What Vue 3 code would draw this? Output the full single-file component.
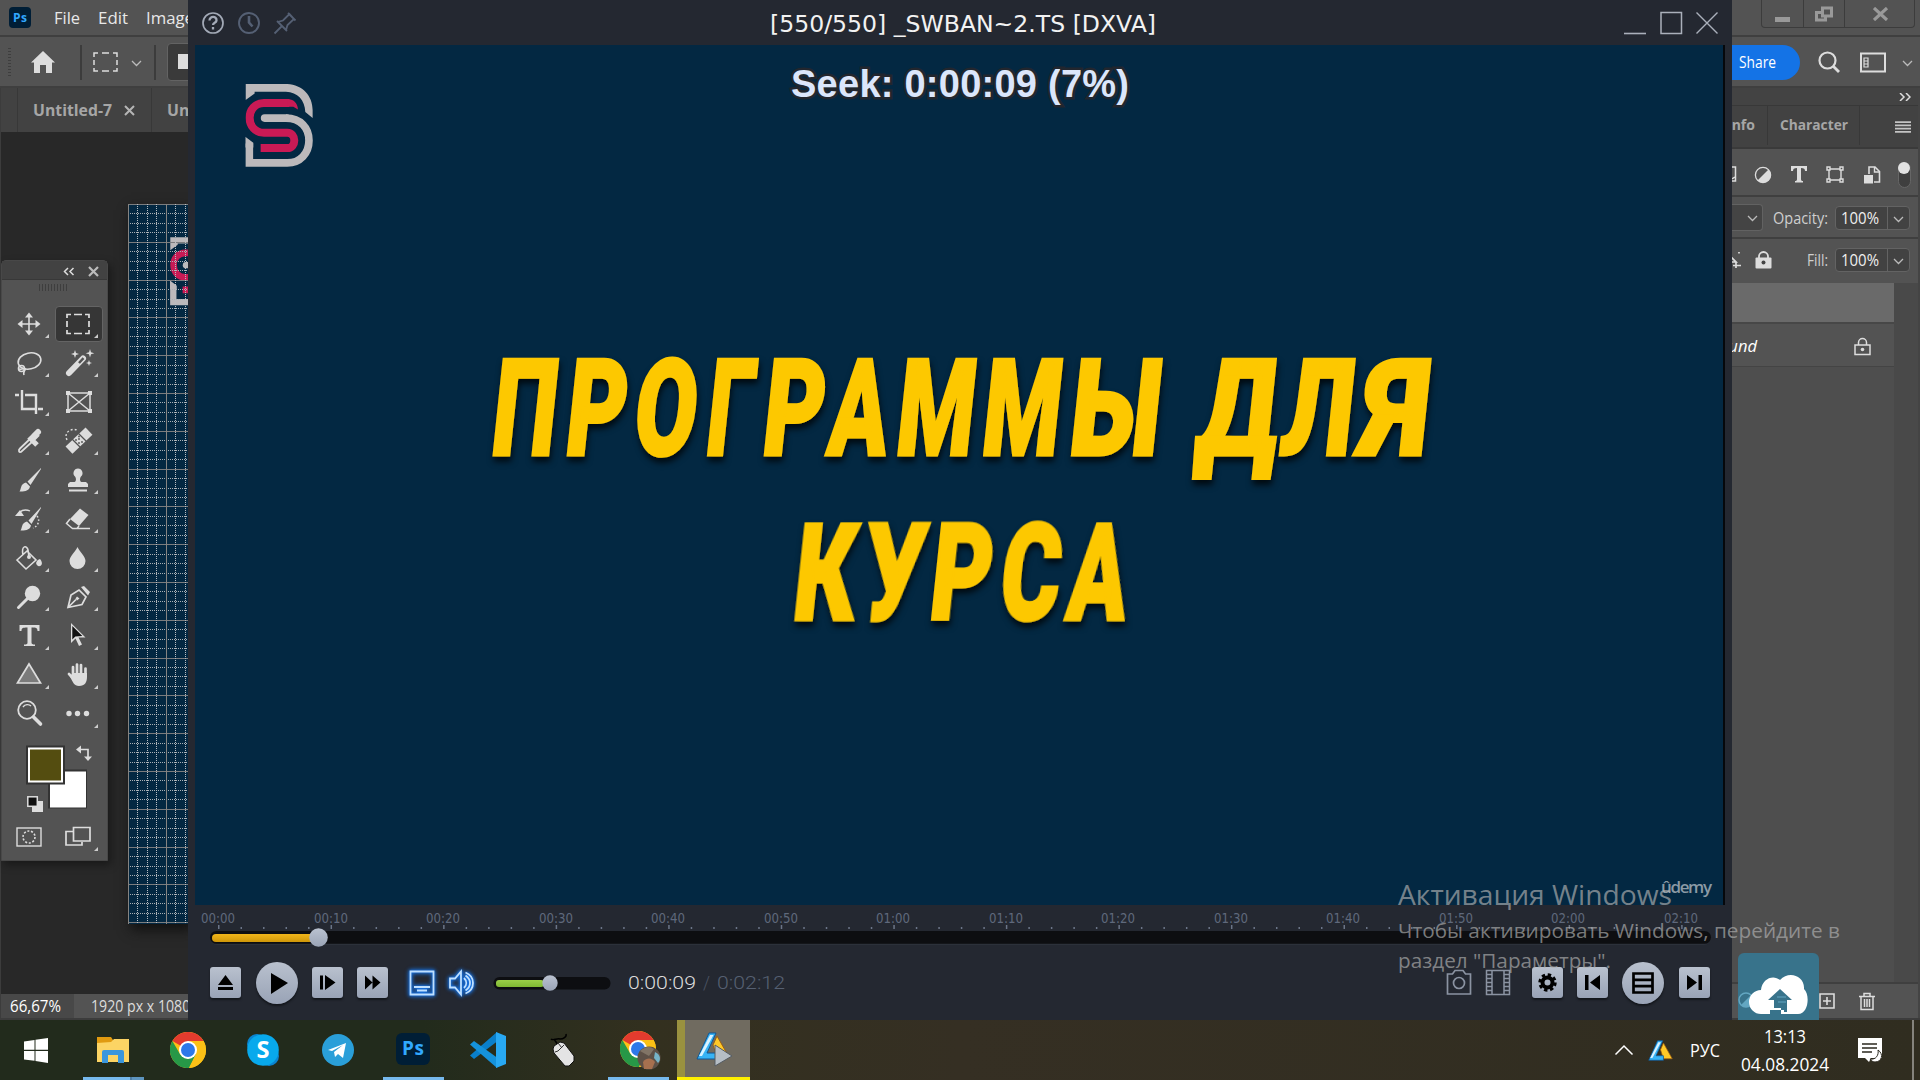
<script setup>
import { h } from 'vue'

/* One line of text set to an exact width, caps centred on the box */
const Fit = (p) => {
  const s = Number(p.s)
  const w = Number(p.w)
  const ht = Math.round(s * 1.3)
  return h('svg', { class: 'fit', width: w, height: ht }, [
    h('text', { x: 0, y: ht / 2 + s * 0.357, 'font-size': s, textLength: w, lengthAdjust: 'spacingAndGlyphs' }, p.t)
  ])
}
Fit.props = ['t', 'w', 's']

const glyphs = {
  move: '<g stroke="#ddd" stroke-width="1.6" fill="none"><path d="M14 4v20M4 14h20"/></g><path fill="#ddd" d="M14 2.5l4 5h-8zM14 25.500l4-5h-8zM2.500 14l5-4v8zM25.500 14l-5-4v8z"/>',
  marquee: '<path d="M3 8V4.500h4M10 4.500h8M21 4.500h4V8M25 11v6M25 20v3.500h-4M18 23.500h-8M7 23.500H3V20M3 17v-6" stroke="#ddd" stroke-width="1.700" fill="none"/>',
  lasso: '<g fill="none" stroke="#ddd" stroke-width="1.600"><ellipse cx="14.500" cy="12" rx="11.500" ry="8" transform="rotate(-12 14.500 12)"/><circle cx="6.500" cy="19.500" r="3"/><path d="M4 20c4 1 7-2 6 1-1 2-2 2-1 5"/></g>',
  wand: '<path d="M5 24L19 9.500" stroke="#ddd" stroke-width="6" stroke-linecap="round"/><path d="M15 14l4.500-4.800" stroke="#535353" stroke-width="2.500"/><path fill="#ddd" d="M11 1l1 3 3 1-3 1-1 3-1-3-3-1 3-1zM26 0l1 3.300 3.300 1-3.300 1-1 3.300-1-3.300-3.300-1 3.300-1zM25 11l.8 2.200 2.200.8-2.200.8-.8 2.200-.8-2.200-2.200-.8 2.200-.8z"/>',
  crop: '<path d="M7 2v19h13M0 7h4M10 7h11v19M23 21h5" stroke="#ddd" stroke-width="2.400" fill="none"/>',
  frame: '<g stroke="#ddd" stroke-width="1.500" fill="none"><path d="M4 5h22v18H4zM4 5l22 18M26 5L4 23"/></g><path fill="#ddd" d="M2 3h4v4H2zM24 3h4v4h-4zM2 21h4v4H2zM24 21h4v4h-4z"/>',
  dropper: '<path d="M16 11L5 21.500c-2 2-1 4 1 3.500L18 14" stroke="#ddd" stroke-width="1.800" fill="none"/><path d="M14 10l8 8M17 13l6-6" stroke="#ddd" stroke-width="5"/><path d="M19 9l4-4" stroke="#ddd" stroke-width="6" stroke-linecap="round"/>',
  heal: '<path d="M5 23L25 4" stroke="#ddd" stroke-width="10"/><path d="M8 12l9 9M14 6l9 9" stroke="#535353" stroke-width="1.300"/><g fill="#535353"><circle cx="12" cy="13" r=".9"/><circle cx="15" cy="16" r=".9"/><circle cx="15" cy="12" r=".9"/><circle cx="18" cy="15" r=".9"/><circle cx="15" cy="9.500" r=".9"/></g><path d="M3 13c-4-9 6-12 10-10" fill="none" stroke="#ddd" stroke-width="1.400" stroke-dasharray="2 2"/>',
  brush: '<path fill="#ddd" d="M26 2L12.500 15.500l3 3.500L26 3zM11 16.500l4 4c-1 5-7 5-10.500 5C6.500 23 5 18 11 16.500z"/>',
  stamp: '<path fill="#ddd" d="M14 2.500a4.600 4.600 0 0 1 3 8c-1.500 2-1.200 5 .5 5.500H22l2 2v3H4v-3l2-2h4.500c1.700-.5 2-3.500.5-5.500a4.600 4.600 0 0 1 3-8zM5 23.500h18v2H5z"/>',
  history: '<path fill="#ddd" d="M26 2L13.500 15.500l3 3.500L26 3zM12 16.500l4 4c-1 5-7 5-10.500 5C7.500 23 6 18 12 16.500zM0 11l5-6 4 6z"/><path d="M5 7c3-3 8-2 10-1" stroke="#ddd" stroke-width="1.300" fill="none"/><path d="M22 11c4 5 0 11-4 12" stroke="#ddd" stroke-width="1.500" fill="none" stroke-dasharray="1.600 2"/>',
  eraser: '<path fill="#ddd" d="M16 3.500l8.500 6.500-9.500 11-9-7z"/><path d="M6 14l-3.500 4.500 6 5h4.500l2-2.500M8 23.500h18" stroke="#ddd" stroke-width="1.500" fill="none"/>',
  bucket: '<path d="M2 16l10-9 9 9-10 9zM8 11c-2-10 4-10 5-5l1 7" stroke="#ddd" stroke-width="1.600" fill="none"/><circle cx="14" cy="13" r="2" fill="#ddd"/><path fill="#ddd" d="M25 15c5 6-1 9-3 6-2-2 0-5 3-6z"/>',
  drop: '<path fill="#ddd" d="M13.500 3c2 5 8 9 8 14a8 8 0 0 1-16 0c0-5 6-9 8-14z"/>',
  dodge: '<circle cx="17.500" cy="10.500" r="7.700" fill="#ddd"/><path d="M3.500 24.500l9-9" stroke="#ddd" stroke-width="3" stroke-linecap="round"/>',
  pen: '<path d="M4 24.500L7 12l8-5 7 7-4 7.500zM4 24.500l8-8" stroke="#ddd" stroke-width="1.700" fill="none"/><path fill="#ddd" d="M17 4l3-1 6 6-2 3.500zM13 13.500l2.500 2-2.500 2-1.500-2z"/>',
  type: '<path fill="#ddd" d="M4.500 4h20v6h-2c0-3-1-3.500-6-3.500v15c0 1.500 1 2 3.500 2V25H9v-1.500c3 0 3.500-.5 3.500-2v-15c-5 0-6 .5-6 3.500h-2z"/>',
  arrow: '<path d="M7 2v20l4.500-4.500L15 25l3-1.500-3.500-7h7z" fill="#ddd"/><path d="M8.300 5v13.500l3-3 7-.5z" fill="#111"/>',
  triangle: '<path d="M14 4l11.500 19h-23z" fill="#7b7b7b" stroke="#ddd" stroke-width="1.700"/>',
  hand: '<path d="M9 17V7M13 15V4.500M17 15V5M21.500 16V8.500M9 18L5 14" stroke="#ddd" stroke-width="2.700" stroke-linecap="round"/><path fill="#ddd" d="M4 13l5 5v-5h14v4c0 5-2 9-8 9-5 0-6-4-9-9z"/>',
  zoom: '<circle cx="12" cy="11" r="8.800" fill="none" stroke="#ddd" stroke-width="1.800"/><path d="M8 8c2-3 6-3 8-1" stroke="#ddd" stroke-width="1.400" fill="none"/><path d="M18.500 18l7 7" stroke="#ddd" stroke-width="3.600" stroke-linecap="round"/>',
  dots: '<g fill="#ddd"><circle cx="5" cy="14.500" r="2.700"/><circle cx="13.500" cy="14.500" r="2.700"/><circle cx="22.500" cy="14.500" r="2.700"/></g>',
  mask: '<rect x="2" y="5" width="24" height="18" fill="none" stroke="#ddd" stroke-width="1.400"/><circle cx="14" cy="14" r="6" fill="none" stroke="#ddd" stroke-width="1.600" stroke-dasharray="2 1.700"/>',
  screens: '<path d="M9 8.500H2V22h16v-3M9.500 4.500H26V18H9.500z" fill="none" stroke="#ddd" stroke-width="1.700"/>',

  min: '<path d="M3 24.500h22" stroke="#aab0bb" stroke-width="1.600"/>',
  max: '<path d="M4 3.500h20.500v21H4z" stroke="#aab0bb" stroke-width="1.500" fill="none"/>',
  close: '<path d="M3.500 3.500l21 21M24.500 3.500l-21 21" stroke="#aab0bb" stroke-width="1.400"/>',
  help: '<circle cx="14" cy="14" r="10" fill="none" stroke="#a3aab7" stroke-width="1.700"/><path d="M10.500 11.500c0-5 7.500-4.500 7 0-.3 2.500-3.500 2-3.500 4.500M14 18v2.400" fill="none" stroke="#a3aab7" stroke-width="2.300"/>',
  clock: '<circle cx="14" cy="14" r="10" fill="none" stroke="#556074" stroke-width="1.900"/><path d="M14 7v6.500l3.500 4" fill="none" stroke="#556074" stroke-width="2.600"/>',
  pin: '<path d="M3.500 24.500l7-7M6 12l10 10M17 4l7.500 7.500M18.500 5L12 11.500l-5 1.500 8 8 1.500-5L23 10z" fill="none" stroke="#556074" stroke-width="1.800"/>'
}
const Ico = (p) => h('svg', { class: 'ico', width: 28, height: 28, viewBox: '0 0 28 28', innerHTML: glyphs[p.n] })
Ico.props = ['n']

const tools = ['move', 'marquee', 'lasso', 'wand', 'crop', 'frame', 'dropper', 'heal', 'brush', 'stamp', 'history', 'eraser', 'bucket', 'drop', 'dodge', 'pen', 'type', 'arrow', 'triangle', 'hand', 'zoom', 'dots']
const noCorner = ['frame', 'zoom']

const labels = Array.from({ length: 14 }, (_, i) => {
  const s = i * 10
  return `0${Math.floor(s / 60)}:${String(s % 60).padStart(2, '0')}`
})
const rulerTicks = Array.from({ length: 66 }, (_, i) => ({ x: 30 + i * 22.51, big: i % 5 === 0 }))
const gridRows = Array.from({ length: 77 }, (_, i) => ({ y: Math.round(i * 9.45) + 0.5, major: i % 4 === 0 }))
const gridCols = [0, 9, 19, 28, 38, 47, 57].map((x, i) => ({ x: x + 0.5, major: i % 4 === 0 }))

/* Slide lettering: [char, ink left, ink width, left bearing, right bearing] */
const headline = [
  { y: 410, chars: [['П', 296.3, 59.3, 4, 4], ['Р', 370.2, 57, 4, 2], ['О', 437, 60, 2.5, 2.5], ['Г', 511, 44.5, 4, 1], ['Р', 567.3, 58, 4, 2], ['А', 629, 62, 0, 0], ['М', 701, 72.5, 4, 4], ['М', 786.7, 73, 4, 4], ['Ы', 874, 85.5, 4, 4], [' ', 965, 20, 0, 0], ['Д', 998, 82, 1, 1], ['Л', 1081.5, 71, 0, 4], ['Я', 1163, 64.5, 1, 4]] },
  { y: 574.5, chars: [['К', 598, 60.5, 4, 0], ['У', 662.7, 64, 0, 0], ['Р', 734.4, 58, 4, 2], ['С', 803, 58, 2.5, 2], ['А', 868, 62, 0, 0]] }
].map(l => ({ y: l.y, chars: l.chars.map(([c, x, w, a, b]) => ({ c, x: x + 1.5 - a, w: w - 3 + a + b })) }))
</script>

<template>
  <div class="desktop">
    <div class="ps">
      <header class="menubar">
        <svg class="pslogo" width="22" height="21"><rect width="22" height="21" rx="4" fill="#001e36" /><text x="4" y="14.500" font-size="12" font-weight="700" fill="#31a8ff" textLength="14">Ps</text></svg>
        <Fit t="File" w="26" s="17" /><Fit t="Edit" w="30" s="17" /><Fit t="Image" w="48" s="17" />
        <div class="winbtns">
          <span class="wb a"><svg width="16" height="20"><path d="M0 13h15v5H0z" fill="#999" /></svg></span>
          <span class="wb b"><svg width="18" height="16" fill="none" stroke="#999" stroke-width="3"><path d="M7.500 2h9v8h-9zM7 6.500H1.500V14h9v-4" /></svg></span>
          <span class="wb c"><svg width="16" height="14"><path d="M1 1l13 12M14 1L1 13" stroke="#999" stroke-width="3.200" /></svg></span>
        </div>
      </header>
      <div class="options">
        <i class="grip"></i>
        <svg class="home" width="26" height="23"><path fill="#ddd" d="M13 0l12 11.500h-3V22h-6v-8h-6v8H4V11.500H1z" /></svg>
        <i class="sep"></i>
        <svg class="mq" width="25" height="20"><path d="M1 5V1h4M9 1h7M20 1h4v4M24 8v5M24 16v3h-4M16 19H9M5 19H1v-3M1 13V8" fill="none" stroke="#ddd" stroke-width="1.500" /></svg>
        <svg class="dn" width="11" height="7"><path d="M1 1l4.500 4.500L10 1" fill="none" stroke="#bbb" stroke-width="1.300" /></svg>
        <i class="sep two"></i>
        <span class="modebtn"><b></b></span>
        <span class="share"><Fit t="Share" w="37" s="15.500" /></span>
        <svg class="srch" width="23" height="23"><circle cx="9.500" cy="9.500" r="8" fill="none" stroke="#ddd" stroke-width="2.200" /><path d="M15 15l6 6" stroke="#ddd" stroke-width="2.800" /></svg>
        <svg class="wsp" width="26" height="21" fill="none" stroke="#ddd"><path d="M1 1.500h24v18H1z" stroke-width="2" /><path d="M4 6h4v9H4zM4 9h4M4 12h4" stroke-width="1.200" /></svg>
        <svg class="dn" width="11" height="7"><path d="M1 1l4.500 4.500L10 1" fill="none" stroke="#bbb" stroke-width="1.300" /></svg>
      </div>
      <div class="body">
        <div class="docs">
          <div class="tabs">
            <span class="tab t0"></span>
            <span class="tab t1"><Fit t="Untitled-7" w="79" s="15.500" /><svg width="11" height="11"><path d="M1 1l9 9M10 1l-9 9" stroke="#b5b5b5" stroke-width="2" /></svg></span>
            <span class="tab t2"><Fit t="Untitled-8" w="79" s="15.500" /></span>
          </div>
          <div class="workspace">
            <svg class="artboard" width="62" height="720">
              <rect width="62" height="720" fill="#032842" />
              <svg x="42" y="33" width="56" height="69" viewBox="736 252 204 250"><g id="mark">
                <path fill="#bcb9bb" d="M737 252H862C908 254 938 288 938 330V354L916 336C915 300 893 276 858 275H764V280L737 300ZM736 410l24 18v14h-24z" />
                <path fill="none" stroke="#bcb9bb" stroke-width="23" stroke-linecap="round" d="M794 354H860" />
                <path fill="none" stroke="#bcb9bb" stroke-width="23" d="M858 354C902 354 927 384 927 421C927 460 900 488.500 862 488.500H748V430" />
                <path fill="none" stroke="#c91a55" stroke-width="24" d="M868 309H792C765 309 749 330 749 353C749 378 766 398 792 398H862C890 398 890 444 862 444H782" />
                <path fill="#c91a55" d="M862 297C880 297 893 308 894 328L880 320H862z" />
              </g></svg>
              <line v-for="(r, i) in gridRows" :key="'r' + i" x1="0" x2="62" :y1="r.y" :y2="r.y" :stroke="r.major ? '#7b7c7e' : '#a9b0b5'" :stroke-dasharray="r.major ? 'none' : '1 1'" />
              <line v-for="(c, i) in gridCols" :key="'c' + i" y1="0" y2="720" :x1="c.x" :x2="c.x" :stroke="c.major ? '#858482' : '#b9bec2'" :stroke-dasharray="c.major ? 'none' : '1 1'" />
            </svg>
          </div>
          <div class="status"><span class="zoomv"><Fit t="66,67%" w="51" s="15.500" /></span><Fit t="1920 px x 1080 px" w="119" s="15.500" /></div>
        </div>
        <aside class="dock">
          <div class="collapse"><svg width="12" height="8"><path d="M1 0l4 4-4 4M7 0l4 4-4 4" fill="none" stroke="#ddd" stroke-width="1.500" /></svg></div>
          <div class="dtabs">
            <span class="dt d1"><Fit t="Info" w="28" s="14.500" /></span>
            <span class="dt d2"><Fit t="Character" w="68" s="14.500" /></span>
            <svg class="burger" width="16" height="12"><path d="M0 1.200h16M0 4.400h16M0 7.600h16M0 10.800h16" stroke="#c4c4c4" stroke-width="1.700" /></svg>
          </div>
          <div class="filters">
            <svg width="5" height="17" fill="none" stroke="#ddd"><path d="M-5 1h8.500v14H-5M0 13l3-2" stroke-width="1.500" /></svg>
            <svg class="f2" width="18" height="18"><circle cx="9" cy="9" r="7.600" fill="none" stroke="#ddd" stroke-width="1.300" /><path fill="#ddd" d="M14.500 3.500a7.600 7.600 0 0 1-11 11z" /></svg>
            <svg class="f3" width="16" height="17"><path fill="#ddd" d="M0 0h16v5h-2c0-2-1-3-4-3v11c0 1.500.5 2 2 2v1.500H4V15c1.500 0 2-.5 2-2V2C3 2 2 3 2 5H0z" /></svg>
            <svg class="f4" width="18" height="17" fill="none" stroke="#ddd" stroke-width="1.400"><path d="M3 3h12v11H3z" /><path fill="#535353" d="M1 1h3v3H1zM14 1h3v3h-3zM1 13h3v3H1zM14 13h3v3h-3z" /></svg>
            <svg class="f5" width="17" height="18"><path d="M5 8V1h6l4.500 4.500V16H10" fill="none" stroke="#ddd" stroke-width="1.600" /><path d="M10.500 1v5h5" fill="none" stroke="#ddd" stroke-width="1.400" /><path fill="#ddd" d="M0 9h9v8.500H0z" /></svg>
            <span class="toggle"><b></b></span>
          </div>
          <div class="row r1">
            <span class="sel"><svg class="dn" width="11" height="7"><path d="M1 1l4.500 4.500L10 1" fill="none" stroke="#bbb" stroke-width="1.300" /></svg></span>
            <Fit class="lb" t="Opacity:" w="55" s="15.500" />
            <span class="inp"><Fit t="100%" w="38" s="15.500" /><b><svg width="11" height="7"><path d="M1 1l4.500 4.500L10 1" fill="none" stroke="#bbb" stroke-width="1.300" /></svg></b></span>
          </div>
          <div class="row r2">
            <svg width="10" height="18" fill="none" stroke="#ddd" stroke-width="1.700"><path d="M-2 5l6 6h-6M4 11v6M1 14.500h8" /><path d="M7 1v3" stroke-dasharray="1.500 2" /></svg>
            <svg class="lock" width="17" height="18"><path d="M4 8V5.500a4.500 4.500 0 0 1 9 0V8" fill="none" stroke="#ddd" stroke-width="1.800" /><rect y="6.500" x=".5" width="16" height="11" rx="1" fill="#ddd" /><circle cx="8.500" cy="11.500" r="2" fill="#444" /></svg>
            <Fit class="lb" t="Fill:" w="21" s="15.500" />
            <span class="inp"><Fit t="100%" w="38" s="15.500" /><b><svg width="11" height="7"><path d="M1 1l4.500 4.500L10 1" fill="none" stroke="#bbb" stroke-width="1.300" /></svg></b></span>
          </div>
          <div class="layers">
            <div class="layer on"></div>
            <div class="layer"><Fit class="und" t="Background" w="88" s="15.500" /><svg width="17" height="19"><path d="M4.500 8V5.500a4 4 0 0 1 8 0V8M1 8h15v9.500H1z" fill="none" stroke="#ddd" stroke-width="1.500" /><circle cx="8.500" cy="12.500" r="1.800" fill="#ddd" /></svg></div>
          </div>
          <div class="dfoot">
            <svg width="16" height="16"><path d="M1 1h14v14H1zM8 4v8M4 8h8" fill="none" stroke="#ddd" stroke-width="1.600" /></svg>
            <svg width="16" height="19" fill="none" stroke="#ddd" stroke-width="1.500"><path d="M0 4.500h16M5 4V1.500h6V4M2 5v12.500h12V5M5.500 7v8M8 7v8M10.500 7v8" /></svg>
          </div>
        </aside>
      </div>

      <div class="toolbox">
        <div class="thead">
          <svg width="12" height="9"><path d="M5 1L1.500 4.500 5 8M10.500 1L7 4.500 10.500 8" fill="none" stroke="#ddd" stroke-width="1.500" /></svg>
          <svg width="11" height="11"><path d="M1 1l9 9M10 1l-9 9" stroke="#bbb" stroke-width="2.200" /></svg>
        </div>
        <div class="tgrip"></div>
        <div class="tgrid">
          <span v-for="t in tools" :key="t" class="tool" :class="{ on: t === 'marquee', corner: !noCorner.includes(t) }"><Ico :n="t" /></span>
        </div>
        <svg class="swatches" width="107" height="80">
          <rect x="47" y="30.500" width="39" height="39" fill="#333" /><rect x="49" y="32.500" width="36" height="36" fill="#fff" />
          <rect x="25" y="6.500" width="39" height="39" fill="#333" /><rect x="27" y="8.500" width="35" height="35" fill="#fff" /><rect x="29" y="10.500" width="31" height="31" fill="#544d10" />
          <path d="M79 10.500h8v8" fill="none" stroke="#ddd" stroke-width="1.700" /><path fill="#ddd" d="M75 10.500l5-4v8zM87 22l-4-4.500h8z" />
          <rect x="31" y="62" width="11" height="11" fill="#ddd" /><rect x="26.800" y="57.800" width="9.500" height="9.500" fill="#111" stroke="#ddd" stroke-width="1.500" />
        </svg>
        <div class="tgrid last"><span class="tool"><Ico n="mask" /></span><span class="tool corner"><Ico n="screens" /></span></div>
      </div>
    </div>

    <section class="player">
      <div class="title">
        <Ico n="help" /><Ico n="clock" /><Ico n="pin" />
        <Fit class="name" t="[550/550] _SWBAN~2.TS [DXVA]" w="386" s="23" />
        <Ico n="min" /><Ico n="max" /><Ico n="close" />
      </div>
      <svg class="video" width="1530" height="860">
        <rect width="1530" height="860" fill="#032842" />
        <rect x="1528" width="2" height="860" fill="#05080c" />
        <svg x="50.300" y="39" width="68" height="83.500" viewBox="736 252 204 250"><use href="#mark" /></svg>
        <text class="seek" x="596" y="52" textLength="338">Seek: 0:00:09 (7%)</text>
        <g class="headline" filter="url(#soft)">
          <g v-for="l in headline" :key="l.y" :transform="`translate(0 ${l.y}) skewX(-6)`">
            <text><tspan v-for="(g, i) in l.chars" :key="i" :x="g.x" :textLength="g.w" lengthAdjust="spacingAndGlyphs">{{ g.c }}</tspan></text>
          </g>
        </g>
        <defs><filter id="soft" x="-5%" y="-10%" width="110%" height="125%"><feDropShadow dx="1" dy="5" stdDeviation="3" flood-color="#000" flood-opacity=".75" /></filter></defs>
        <text class="udemy" x="1466" y="847.500" textLength="51">ûdemy</text>
      </svg>
      <div class="ruler"><span v-for="l in labels" :key="l"><Fit :t="l" w="34" s="14.500" /></span></div>
      <svg class="seekbar" width="1544" height="26">
        <defs>
          <linearGradient id="knob" x2="0" y2="1"><stop stop-color="#bac2d0" /><stop offset="1" stop-color="#9aa4b6" /></linearGradient>
          <linearGradient id="amber" x2="0" y2="1"><stop stop-color="#f0b51a" /><stop offset="1" stop-color="#cf9709" /></linearGradient>
          <linearGradient id="lime" x2="0" y2="1"><stop stop-color="#9bcf48" /><stop offset="1" stop-color="#7fb832" /></linearGradient>
        </defs>
        <rect v-for="(t, i) in rulerTicks" :key="i" :x="t.x" :y="t.big ? 0 : 2" width="1.500" :height="t.big ? 4 : 2" fill="#6b7588" />
        <rect x="22" y="6" width="1501" height="14" rx="7" fill="#2c313a" />
        <rect x="22" y="6" width="1501" height="12.800" rx="6.400" fill="#0d0e11" />
        <rect x="24" y="9" width="104" height="8" rx="4" fill="url(#amber)" />
        <circle cx="130.500" cy="12.500" r="9.300" fill="url(#knob)" />
      </svg>
      <div class="controls">
        <span class="sq"><svg width="31" height="31"><path d="M15.500 8l7.500 10H8zM8 20h15v3H8z" /></svg></span>
        <span class="rd play"><svg width="42" height="42"><path d="M15 11l17 10-17 11z" /></svg></span>
        <span class="sq step"><svg width="31" height="31"><path d="M8 8.500h3v14H8zM13 8l10.500 7.500L13 23z" /></svg></span>
        <span class="sq ff"><svg width="31" height="31"><path d="M8 8.500l7.500 7-7.500 7zM15.500 8.500l8 7-8 7z" /></svg></span>
        <svg class="glow scr" width="28" height="28"><path d="M2.500 2.500h23v23h-23zM6 18h16" /><path d="M9 21.500h10" stroke-width="2" /></svg>
        <svg class="glow spk" width="28" height="28"><path d="M3 9.500h5l6-7v23l-6-7H3zM17 9c3 3 3 7 0 10M18.500 3.500c10 4 10 17 0 21M18.500 6.500c6 4 6 11 0 15" /></svg>
        <svg class="vol" width="118" height="20"><rect x=".5" y="4" width="117" height="12.500" rx="6" fill="#0d0e11" /><rect x="3" y="7" width="48" height="7" rx="3" fill="url(#lime)" /><circle cx="57" cy="10" r="7.700" fill="url(#knob)" /></svg>
        <Fit class="now" t="0:00:09" w="68" s="19" /><Fit class="sl" t="/" w="7" s="18" /><Fit class="tot" t="0:02:12" w="68" s="19" />
        <svg class="cam" width="26" height="27" fill="none" stroke="#8b93a2" stroke-width="1.700"><path d="M1.500 5h5l2.500-3.500h8L19.500 5h5v20h-23z" /><circle cx="13" cy="14" r="5.500" /></svg>
        <svg class="film" width="26" height="27" fill="none" stroke="#8b93a2" stroke-width="1.500"><path d="M1.500 1.500h23v24h-23zM7 1.500v24M19 1.500v24M1.500 5.500H7M1.500 9.500H7M1.500 13.500H7M1.500 17.500H7M1.500 21.500H7M19 5.500h5.500M19 9.500h5.500M19 13.500h5.500M19 17.500h5.500M19 21.500h5.500" /></svg>
        <span class="sq gear"><svg width="31" height="31" fill="none" stroke="#000"><circle cx="15.500" cy="15.500" r="5" stroke-width="4" /><circle cx="15.500" cy="15.500" r="7.800" stroke-width="2.800" stroke-dasharray="3.400 2.726" /></svg></span>
        <span class="sq prev"><svg width="31" height="31"><path d="M8 8h3.500v15H8zM23 8v15l-10-7.500z" /></svg></span>
        <span class="rd list"><svg width="42" height="42" fill="none" stroke="#000" stroke-width="2.700"><path d="M11.500 11.500h19v19h-19zM11 17.800h20M11 24.200h20" /></svg></span>
        <span class="sq next"><svg width="31" height="31"><path d="M19.500 8H23v15h-3.500zM8 8l10 7.500L8 23z" /></svg></span>
      </div>
    </section>

    <div class="activate">
      <Fit t="Активация Windows" w="274" s="28" />
      <Fit class="l2" t="Чтобы активировать Windows, перейдите в" w="442" s="20.500" />
      <Fit class="l3" t='раздел "Параметры".' w="213" s="20.500" />
    </div>
    <svg class="cloud" width="81" height="67">
      <path d="M0 67V6a6 6 0 0 1 6-6h69a6 6 0 0 1 6 6v61z" fill="#38738b" />
      <circle cx="8" cy="47" r="7" fill="none" stroke="#63a7c2" stroke-width="1.500" /><path d="M3 52a7 7 0 0 0 10-10z" fill="#63a7c2" />
      <path fill="#fff" d="M23 61a11.500 11.500 0 0 1 0-24c1-11 12-16 19-10 9-10 25-4 24 9 6 5 5 25-6 25z" />
      <path fill="#38738b" d="M42 36l12 11h-5v12h-3v-2h-3v-2h-7v-8h-6z" /><path d="M32 61v-4h11v4" fill="#38738b" /><path d="M39 44h9M40 49h8" stroke="#63a7c2" />
    </svg>

    <footer class="taskbar">
      <span class="slot s0"><svg width="24" height="25"><path fill="#fff" d="M0 3.500L10.500 2v9.800H0zM11.500 1.800L24 0v11.800H11.500zM0 13h10.500v9.700L0 21.500zM11.500 13H24v12l-12.500-2z" /></svg></span>
      <span class="slot run split"><svg width="34" height="28"><path fill="#e09a10" d="M1 1h14l2 3v4H1z" /><path fill="#fcd464" d="M1 7l14-1 3-3h15v23H1z" /><path fill="#3a96dd" d="M6 16q0-2 2-2h18q2 0 2 2v11h-6v-8h-10v8H6z" /></svg></span>
      <span class="slot"><svg width="36" height="36" viewBox="-18 -18 36 36"><g id="chrome"><circle r="18" fill="#fbc116" /><path fill="#e33b2e" d="M0 0L-15.600-9A18 18 0 0 1 15.600-9H0z" /><path fill="#279847" d="M1 18A18 18 0 0 1-15.600-9L-7.500 5 0 9 8 4z" /><path fill="#fbc116" d="M0-9H15.600A18 18 0 0 1 1 18L8 4z" /><circle r="9" fill="#fff" /><circle r="7" fill="#2d78e8" /></g></svg></span>
      <span class="slot"><svg width="34" height="34"><circle cx="11" cy="11" r="10" fill="#0a84d0" /><circle cx="23" cy="23" r="10" fill="#0a84d0" /><circle cx="17" cy="17" r="15.800" fill="#08a9ec" /><text x="10.500" y="25" font-size="23" font-weight="700" fill="#fff" textLength="13" lengthAdjust="spacingAndGlyphs">S</text></svg></span>
      <span class="slot"><svg width="32" height="32"><circle cx="16" cy="16" r="16" fill="#2a9fd9" /><path fill="#fff" d="M6 16L24 9l-3 15-5-4-3 3-1-5 9-7-11 6z" /></svg></span>
      <span class="slot run"><svg class="up" width="34" height="32"><rect width="34" height="32" rx="6" fill="#001e36" /><text x="6" y="21.500" font-size="19" font-weight="700" fill="#31a8ff" textLength="22">Ps</text></svg></span>
      <span class="slot"><svg width="36" height="36"><path fill="#0a7fca" d="M27 0L0 23.500 4 27 29 8z" /><path fill="#1592dc" d="M0 12.500L4 9l25 18-2 9z" /><path fill="#28a9f3" d="M26 0l10 4v28l-10 4z" /></svg></span>
      <span class="slot"><svg width="28" height="34"><path d="M2 6c2 2 6-1 9 0 3 0 7-2 6-5M5 6l4 6" fill="none" stroke="#000" stroke-width="1.500" /><path fill="#e4e4e4" stroke="#111" d="M4 16l1-3 6-4 4 1 10 13v5l-5 5h-4L5 20z" /><path d="M6 19l3-1 6-6M9 10l4 5" stroke="#333" fill="none" /></svg></span>
      <span class="slot run"><svg class="prof" width="42" height="40" viewBox="-18 -18 42 40"><use href="#chrome" /><circle cx="11" cy="9" r="11.500" fill="#5d5147" /><path fill="#a6704f" d="M5 13c4-5 9-4 12 0l-3 7H6z" /><path fill="#75b4c8" d="M17 3c6 3 6 8 3 11l-4-5z" /><path fill="#817566" d="M2 2q8-7 14-2l-5 7z" /></svg></span>
      <span class="slot active"><svg width="38" height="36"><g id="alloy"><path fill="#ffc928" stroke="#9b5e16" d="M22 5l12 21H22l-4-12z" /><path fill="#37b3f5" stroke="#115796" d="M14 2h7L12 22h10v6H2z" /><path fill="#d9f2ff" d="M15 4h3.500L7 25H4z" /></g><path fill="#b6bec6" stroke="#555c63" d="M20 14l17 11-17 10z" /></svg></span>
      <span class="tray">
        <svg width="20" height="12"><path d="M1.500 10.500L10 2l8.500 8.500" fill="none" stroke="#fff" stroke-width="1.500" /></svg>
        <svg class="ti" width="25" height="21" viewBox="1 1 34 28" preserveAspectRatio="none"><use href="#alloy" /></svg>
        <Fit class="lang" t="РУС" w="30" s="17.500" />
        <span class="clock"><Fit t="13:13" w="42" s="17.500" /><Fit t="04.08.2024" w="88" s="17.500" /></span>
        <svg class="note" width="26" height="26"><path fill="#fff" d="M1 0h24v20H14l-2 4-4-4H1z" /><path d="M5 6h15M5 10h15M5 14h10" stroke="#2b291f" stroke-width="1.500" /><path fill="#fff" stroke="#2b291f" d="M21 12c6 4 4 12-3 12-3 0-4-2-5-3 6 1 9-4 8-9z" /></svg>
        <i></i>
      </span>
    </footer>
  </div>
</template>

<style>
body { margin: 0; background: #282828; overflow: hidden; }
.fit { display: block; flex: none; overflow: visible; }
.fit text { fill: currentColor; }
.ico { display: block; flex: none; overflow: visible; }
</style>

<style scoped>
* { box-sizing: border-box; }
svg { flex: none; display: block; }
.desktop { position: relative; width: 1920px; height: 1080px; overflow: hidden; display: flex; flex-direction: column; font-family: "Open Sans", "Noto Sans", sans-serif; color: #e8e8e8; }
.ps { height: 1020px; display: flex; flex-direction: column; background: #535353; position: relative; border-bottom: 2px solid #3c3c3c; }
.menubar { height: 37px; display: flex; align-items: center; padding-left: 9px; border-bottom: 2px solid #3f3f3f; }
.pslogo { margin-right: 23px; }
.menubar .fit { margin-right: 18px; }
.winbtns { margin-left: auto; align-self: flex-start; display: flex; width: 154px; height: 28px; margin-right: 5px; border: 1px solid #3c3c3c; border-top: 0; border-radius: 0 0 4px 4px; }
.wb { display: flex; align-items: center; justify-content: center; border-right: 1px solid #3c3c3c; }
.wb.a { width: 42px; } .wb.b { width: 41px; } .wb.c { flex: 1; border: 0; padding-left: 2px; }
.options { height: 51px; display: flex; align-items: center; border-bottom: 2px solid #3f3f3f; padding: 1px 7px 0 8px; }
.grip { width: 3px; height: 28px; background: repeating-linear-gradient(#3e3e3e 0 1px, transparent 1px 3px); }
.home { margin-left: 19px; }
.sep { width: 2px; height: 35px; background: #3c3c3c; margin-left: 24px; }
.mq { margin: 0 13px 0 11px; }
.dn { margin-top: 2px; }
.sep.two { margin-left: 12px; }
.modebtn { width: 60px; height: 38px; margin-left: 11px; background: #3a3a3a; border: 1px solid #636363; border-radius: 4px; padding: 10px; }
.modebtn b { display: block; width: 15px; height: 15px; background: #ddd; }
.share { margin-left: auto; width: 101px; height: 35px; border-radius: 18px; background: #1473e6; color: #fff; display: flex; align-items: center; padding-left: 40px; padding-bottom: 1px; }
.srch { margin-left: 18px; } .wsp { margin: 0 16px 0 19px; }
.body { flex: 1; display: flex; min-height: 0; }
.docs { flex: 1; display: flex; flex-direction: column; border-left: 1px solid #3c3c3c; }
.tabs { height: 44px; display: flex; background: #424242; color: #a6a6a6; font-weight: 700; }
.tab { display: flex; align-items: center; border-right: 1px solid #383838; gap: 12px; }
.tab .fit { margin-top: -1px; }
.t0 { width: 17px; } .t1 { width: 134px; padding-left: 15px; } .t2 { padding: 0 40px 0 15px; }
.workspace { flex: 1; background: #282828; padding: 72px 0 0 127px; }
.artboard { box-shadow: 3px 6px 12px #111; overflow: hidden; }
.status { height: 24px; display: flex; align-items: center; color: #ddd; }
.zoomv { width: 73px; height: 24px; background: #484848; display: flex; align-items: center; padding-left: 9px; margin-right: 17px; color: #fff; }
.dock { width: 188px; display: flex; flex-direction: column; overflow: hidden; border-right: 2px solid #444; }
.collapse { height: 18px; background: #434343; border-bottom: 1px solid #383838; display: flex; align-items: center; padding-left: 167px; }
.dtabs { height: 43px; background: #424242; display: flex; align-items: center; color: #a6a6a6; font-weight: 700; border-bottom: 2px solid #3a3a3a; padding-bottom: 3px; }
.dt { height: 40px; display: flex; align-items: center; border-right: 1px solid #383838; padding-bottom: 2px; }
.d1 { width: 36px; } .d1 .fit { margin-left: -5px; } .d2 { width: 92px; padding-left: 12px; }
.burger { margin-left: 35px; margin-top: 3px; }
.filters { height: 48px; display: flex; align-items: center; border-bottom: 2px solid #3f3f3f; padding-top: 5px; }
.f2 { margin-left: 17px; } .f3 { margin-left: 19px; } .f4 { margin-left: 19px; } .f5 { margin-left: 20px; }
.toggle { width: 13px; height: 26px; border-radius: 7px; background: #3f3f3f; margin-left: 17px; border: 1px solid #666; }
.toggle b { display: block; width: 12px; height: 12px; border-radius: 50%; background: #e2e2e2; margin: -1px 0 0 -1px; }
.row { display: flex; align-items: center; }
.r1 { height: 42px; border-bottom: 2px solid #3f3f3f; color: #cfcfcf; padding-top: 1px; } .r2 { height: 44px; padding-bottom: 3px; color: #cfcfcf; }
.sel { width: 31px; height: 27px; background: #444; border: 1px solid #626262; border-left: 0; border-radius: 0 4px 4px 0; display: flex; align-items: center; justify-content: flex-end; padding-right: 4px; }
.r1 .lb { margin-left: 10px; } .r2 .lb { margin-left: 35px; }
.lock { margin-left: 13px; }
.inp { width: 75px; height: 24px; margin-left: 7px; background: #424242; border: 1px solid #636363; border-radius: 4px; display: flex; align-items: center; padding-left: 5px; color: #f0f0f0; }
.inp b { margin-left: auto; width: 22px; height: 22px; border-left: 1px solid #636363; display: flex; align-items: center; justify-content: center; padding-top: 4px; }
.layers { flex: 1; background: linear-gradient(90deg, #4e4e4e 162px, #494949 162px); }
.layer { width: 162px; height: 43px; background: #535353; border-bottom: 1px solid #444; display: flex; align-items: center; justify-content: space-between; padding: 2px 23px 0 0; }
.layer.on { height: 41px; background: #6a6a6a; border-bottom: 2px solid #474747; }
.und { margin-left: -63px; font-style: italic; color: #fff; }
.dfoot { height: 36px; border-top: 2px solid #3f3f3f; display: flex; align-items: center; gap: 24px; padding-left: 87px; }

.toolbox { position: absolute; left: 1px; top: 260px; width: 107px; height: 601px; background: #535353; border: 1px solid #484848; border-radius: 5px 5px 0 0; box-shadow: 3px 4px 8px rgba(0,0,0,.4); }
.thead { height: 19px; background: #424242; border-bottom: 1px solid #383838; display: flex; align-items: center; gap: 13px; padding: 3px 0 0 61px; }
.tgrip { width: 29px; height: 7px; margin: 4px 0 13.500px 37px; background: repeating-linear-gradient(90deg, #3e3e3e 0 1px, transparent 1px 3px); }
.tgrid { display: grid; grid-template-columns: 49px 49px; grid-auto-rows: 38.950px; padding-left: 2.500px; }
.tool { position: relative; display: flex; align-items: center; justify-content: center; }
.tool.on::before { content: ""; position: absolute; inset: 1px 0 1px 1px; background: #363636; border: 1px solid #646464; border-radius: 4px; }
.tool .ico { position: relative; }
.tool.corner::after { content: ""; position: absolute; right: 5px; bottom: 5px; border: 2.5px solid; border-color: transparent #ccc #ccc transparent; }
.swatches { margin: 6px 0 0 -1px; }
.last { grid-auto-rows: 38px; margin-top: -1px; }

.player { position: absolute; left: 188px; top: 0; width: 1544px; height: 1020px; background: #242831; display: flex; flex-direction: column; }
.title { height: 45px; display: flex; align-items: center; gap: 8px; padding: 0 11px; color: #f2f2f2; font-family: "DejaVu Sans", sans-serif; }
.name { margin: 0 auto; position: relative; left: 3px; top: 1px; }
.video { margin-left: 7px; overflow: hidden; }
.seek { font: 700 38px "Liberation Sans", sans-serif; fill: #dbe6fb; stroke: #22262e; stroke-width: 5px; paint-order: stroke; }
.headline text { font-family: Roboto, sans-serif; font-weight: 900; font-size: 134.600px; fill: #fdc800; stroke: #fdc800; stroke-width: 3px; white-space: pre; }
.udemy { font: 600 17px "Open Sans", sans-serif; fill: #8b9aa5; }
.ruler { height: 20px; display: flex; padding-left: 13px; align-items: center; padding-top: 4px; color: #5f697c; font-family: "DejaVu Sans Condensed", "DejaVu Sans", sans-serif; }
.ruler span { width: 112.54px; flex: none; }
.ruler span:last-child { width: 34px; }
.controls { display: flex; align-items: center; height: 63px; padding-left: 22px; }
.sq, .rd { flex: none; background: linear-gradient(#b9c1ce, #99a3b6); box-shadow: 0 2px 2px #14171c; }
.sq { width: 31px; height: 31px; border-radius: 3px; }
.rd { width: 42px; height: 42px; border-radius: 50%; }
.play { margin: 0 14.500px; } .ff { margin-left: 14px; }
.glow { fill: none; stroke: #bfe0ff; stroke-width: 1.800; filter: drop-shadow(0 0 2px #1577f0) drop-shadow(0 0 1px #1577f0); }
.scr { margin-left: 20px; } .spk { margin-left: 11px; }
.vol { margin-left: 18px; }
.now { margin-left: 17px; color: #dcdcdc; } .sl { margin: 0 7px; color: #4b5464; } .tot { color: #566072; }
.now, .tot, .sl { font-family: Roboto, sans-serif; font-weight: 300; }
.cam { margin-left: auto; } .film { margin: 0 21px 0 13px; } .prev { margin: 0 14px; } .next { margin: 0 22px 0 15px; }

.activate { position: absolute; left: 1398px; top: 877px; color: rgba(176,176,176,.68); }
.activate .l2 { margin-top: 4px; } .activate .l3 { margin-top: 3px; }
.cloud { position: absolute; left: 1738px; top: 953px; }

.taskbar { height: 60px; display: flex; background: linear-gradient(90deg, #222b1c, #222b1c 22%, #33301f 34%, #352f23 50%, #302d20); }
.slot { width: 75px; height: 60px; display: flex; align-items: center; justify-content: center; position: relative; flex: none; }
.s0 { padding-right: 3px; }
.run::after { content: ""; position: absolute; left: 8px; bottom: 0; width: 61px; height: 3px; background: #76b9ed; }
.split::after { background: linear-gradient(90deg, #76b9ed 47px, #4f7ea6 47px 49px, #5e95bf 49px); }
.up { margin-bottom: 3px; }
.prof { margin: 2px 0 0 6px; }
.active { margin-left: 2px; width: 73px; background: linear-gradient(90deg, #99913f 8px, #706b60 8px); border-bottom: 3px solid #fff000; }
.tray { margin-left: auto; display: flex; align-items: center; color: #fff; }
.ti { margin: 0 17px 0 14px; }
.clock { display: flex; flex-direction: column; align-items: center; gap: 5px; margin: 0 28px 0 21px; }
.note { margin-top: 2px; }
.tray i { width: 2px; height: 60px; background: #85837c; margin: 0 6px 0 29px; }
</style>
